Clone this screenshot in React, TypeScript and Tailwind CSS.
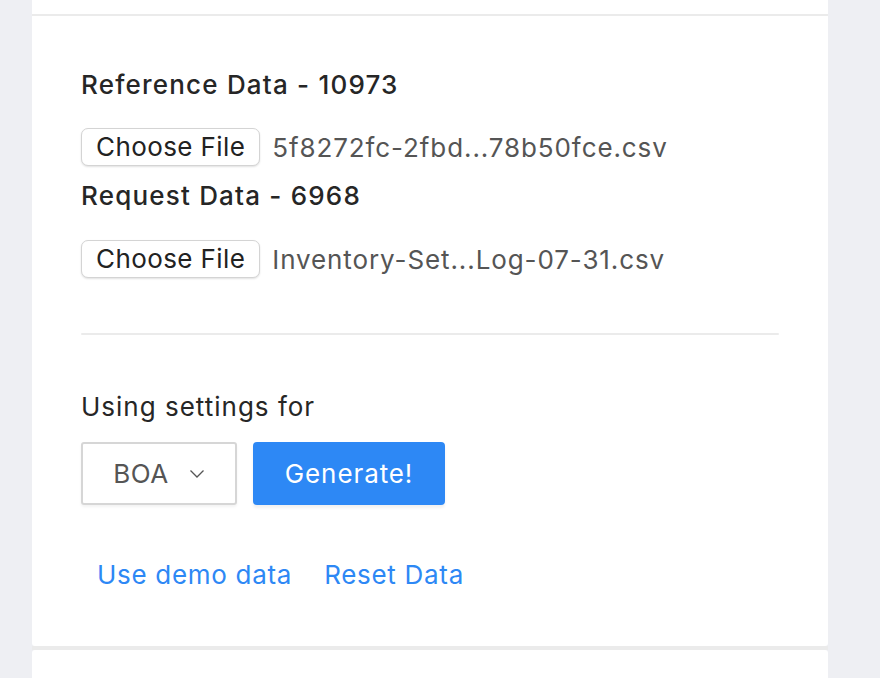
const font = { fontFamily: "Inter, 'Noto Sans', sans-serif" };

function FileRow({ name }: { name: string }) {
  return (
    <div className="flex items-center h-[38px]">
      <button className="h-[38px] px-[14px] rounded-[7px] border border-[#d4d4d4] bg-white text-[26px] tracking-[0.4px] leading-none text-[#222] shadow-[0_1px_2px_rgba(0,0,0,0.12)]">
        Choose File
      </button>
      <span className="ml-[12px] text-[26px] tracking-[0.9px] text-[#555]">{name}</span>
    </div>
  );
}

export default function App() {
  return (
    <div className="w-[880px] h-[678px] overflow-hidden bg-[#eeeff3]" style={font}>
      <div className="mx-[32px] w-[796px]">
        <div className="h-[14px] bg-white" />
        <div className="h-[2px] bg-[#ebebeb]" />
        <div className="h-[630px] bg-white rounded-b-[3px] px-[49px] pt-[53px]">
          <h2 className="text-[26px] tracking-[1.2px] leading-[32px] font-medium text-[#262626]">
            Reference Data - 10973
          </h2>
          <div className="mt-[27px]">
            <FileRow name="5f8272fc-2fbd...78b50fce.csv" />
          </div>
          <h2 className="mt-[14px] text-[26px] tracking-[1.2px] leading-[32px] font-medium text-[#262626]">
            Request Data - 6968
          </h2>
          <div className="mt-[28px]">
            <FileRow name="Inventory-Set...Log-07-31.csv" />
          </div>
          <div className="mt-[55px] h-[2px] rounded-full bg-[#ebebeb]" />
          <p className="mt-[56px] text-[26px] tracking-[1px] leading-[32px] text-[#262626]">
            Using settings for
          </p>
          <div className="mt-[19px] flex gap-[16px]">
            <div className="w-[156px] h-[63px] rounded-[3px] border-2 border-[#d6d6d6] flex items-center justify-center gap-[20px] text-[26px] tracking-[0.6px] text-[#555] shadow-[0_2px_3px_rgba(0,0,0,0.05)]">
              <span>BOA</span>
              <svg width="16" height="10" viewBox="0 0 16 10" fill="none">
                <path d="M1.5 1.5 L8 8 L14.5 1.5" stroke="#555" strokeWidth="1.3" />
              </svg>
            </div>
            <button className="w-[192px] h-[63px] rounded-[4px] bg-[#2d88f5] text-white text-[26px] tracking-[0.9px] shadow-[0_3px_3px_rgba(0,0,0,0.06)]">
              Generate!
            </button>
          </div>
          <div className="mt-[49px] flex text-[26px] tracking-[0.7px] text-[#2d88f5]">
            <button className="px-[16px] h-[40px]">Use demo data</button>
            <button className="px-[16px] h-[40px]">Reset Data</button>
          </div>
        </div>
        <div className="h-[4px] bg-[#ebebeb]" />
        <div className="h-[40px] bg-white rounded-t-[3px]" />
      </div>
    </div>
  );
}
